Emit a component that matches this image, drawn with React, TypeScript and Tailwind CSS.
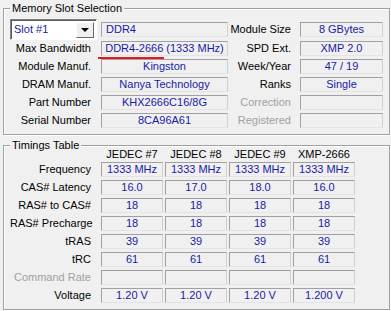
import React from "react";

const field =
    "h-[15px] border border-[#a0a0a0] border-b-[#e4e4e4] border-r-[#d0d0d0] flex items-center justify-center text-[#1a1aa6] leading-none whitespace-nowrap";

const slotRows: { label: string; value: string; rLabel: string; rValue: string; disabled?: boolean }[] = [
    { label: "Max Bandwidth", value: "DDR4-2666 (1333 MHz)", rLabel: "SPD Ext.", rValue: "XMP 2.0" },
    { label: "Module Manuf.", value: "Kingston", rLabel: "Week/Year", rValue: "47 / 19" },
    { label: "DRAM Manuf.", value: "Nanya Technology", rLabel: "Ranks", rValue: "Single" },
    { label: "Part Number", value: "KHX2666C16/8G", rLabel: "Correction", rValue: "", disabled: true },
    { label: "Serial Number", value: "8CA96A61", rLabel: "Registered", rValue: "", disabled: true },
];

const heads = ["JEDEC #7", "JEDEC #8", "JEDEC #9", "XMP-2666"];

const timings: { label: string; values: string[]; disabled?: boolean }[] = [
    { label: "Frequency", values: ["1333 MHz", "1333 MHz", "1333 MHz", "1333 MHz"] },
    { label: "CAS# Latency", values: ["16.0", "17.0", "18.0", "16.0"] },
    { label: "RAS# to CAS#", values: ["18", "18", "18", "18"] },
    { label: "RAS# Precharge", values: ["18", "18", "18", "18"] },
    { label: "tRAS", values: ["39", "39", "39", "39"] },
    { label: "tRC", values: ["61", "61", "61", "61"] },
    { label: "Command Rate", values: ["", "", "", ""], disabled: true },
    { label: "Voltage", values: ["1.20 V", "1.20 V", "1.20 V", "1.200 V"] },
];

function Group({ title, className, children }: { title: string; className: string; children: React.ReactNode }) {
    return (
        <div className={`relative ml-[3px] w-[387px] border border-[#a0a0a0] shadow-[inset_1px_1px_0_#ffffff,1px_1px_0_#ffffff] ${className}`}>
            <span className="absolute -top-[8px] left-[6px] px-[2px] bg-[#f0f0f0] leading-[14px] text-black">
                {title}
            </span>
            {children}
        </div>
    );
}

export default function App() {
    return (
        <div className="w-[391px] h-[311px] bg-[#f0f0f0] pt-[8px] font-['Liberation_Sans',Arial,sans-serif] text-[11px] text-black overflow-hidden">
            {/* Memory Slot Selection */}
            <Group title="Memory Slot Selection" className="h-[127px] pt-[10px] pl-[6px]">
                <div className="flex items-center h-[21px]">
                    <div className="w-[87px] h-[21px] bg-white border border-[#828282] border-b-white border-r-white shadow-[inset_1px_1px_0_#5a5a5a] flex items-center">
                        <span className="pl-[3px] flex-1 text-[#1a1aa6] leading-none">Slot #1</span>
                        <div className="w-[18px] h-[16px] mr-[2px] bg-[#f0f0f0] border border-white border-b-[#696969] border-r-[#696969] flex items-center justify-center">
                            <div className="w-0 h-0 border-l-[4px] border-r-[4px] border-t-[4px] border-l-transparent border-r-transparent border-t-black" />
                        </div>
                    </div>
                    <div className={`${field} ml-[4px] w-[127px] !justify-start pl-[4px]`}>DDR4</div>
                    <div className="w-[72px] pr-[9px] text-right">Module Size</div>
                    <div className={`${field} w-[83px]`}>8 GBytes</div>
                </div>
                <div className="mt-[1px] flex flex-col gap-[3px]">
                    {slotRows.map((r, i) => (
                        <div key={r.label} className="flex items-center h-[15px]">
                            <div className="w-[81px] text-right whitespace-nowrap">{r.label}</div>
                            <div className={`${field} relative ml-[10px] w-[127px]`}>
                                {r.value}
                                {i === 0 && <div className="absolute -bottom-[4px] -left-[4px] w-[66px] h-[2px] bg-[#e11a1f]" />}
                            </div>
                            <div className={`w-[72px] pr-[9px] text-right whitespace-nowrap ${r.disabled ? "text-[#a0a0a0]" : ""}`}>
                                {r.rLabel}
                            </div>
                            <div className={`${field} w-[83px]`}>{r.rValue}</div>
                        </div>
                    ))}
                </div>
            </Group>

            {/* Timings Table */}
            <Group title="Timings Table" className="mt-[10px] h-[165px] pt-[1px] pl-[6px]">
                <div className="flex items-center h-[15px]">
                    <div className="w-[91px]" />
                    <div className="flex gap-[2px]">
                        {heads.map(h => (
                            <div key={h} className="w-[62px] text-center whitespace-nowrap">{h}</div>
                        ))}
                    </div>
                </div>
                <div className="flex flex-col gap-[3px]">
                    {timings.map(t => (
                        <div key={t.label} className="flex items-center h-[15px]">
                            <div className={`w-[81px] text-right whitespace-nowrap ${t.disabled ? "text-[#a0a0a0]" : ""}`}>
                                {t.label}
                            </div>
                            <div className="ml-[10px] flex gap-[2px]">
                                {t.values.map((v, i) => (
                                    <div key={i} className={`${field} w-[62px]`}>{v}</div>
                                ))}
                            </div>
                        </div>
                    ))}
                </div>
            </Group>
        </div>
    );
}
